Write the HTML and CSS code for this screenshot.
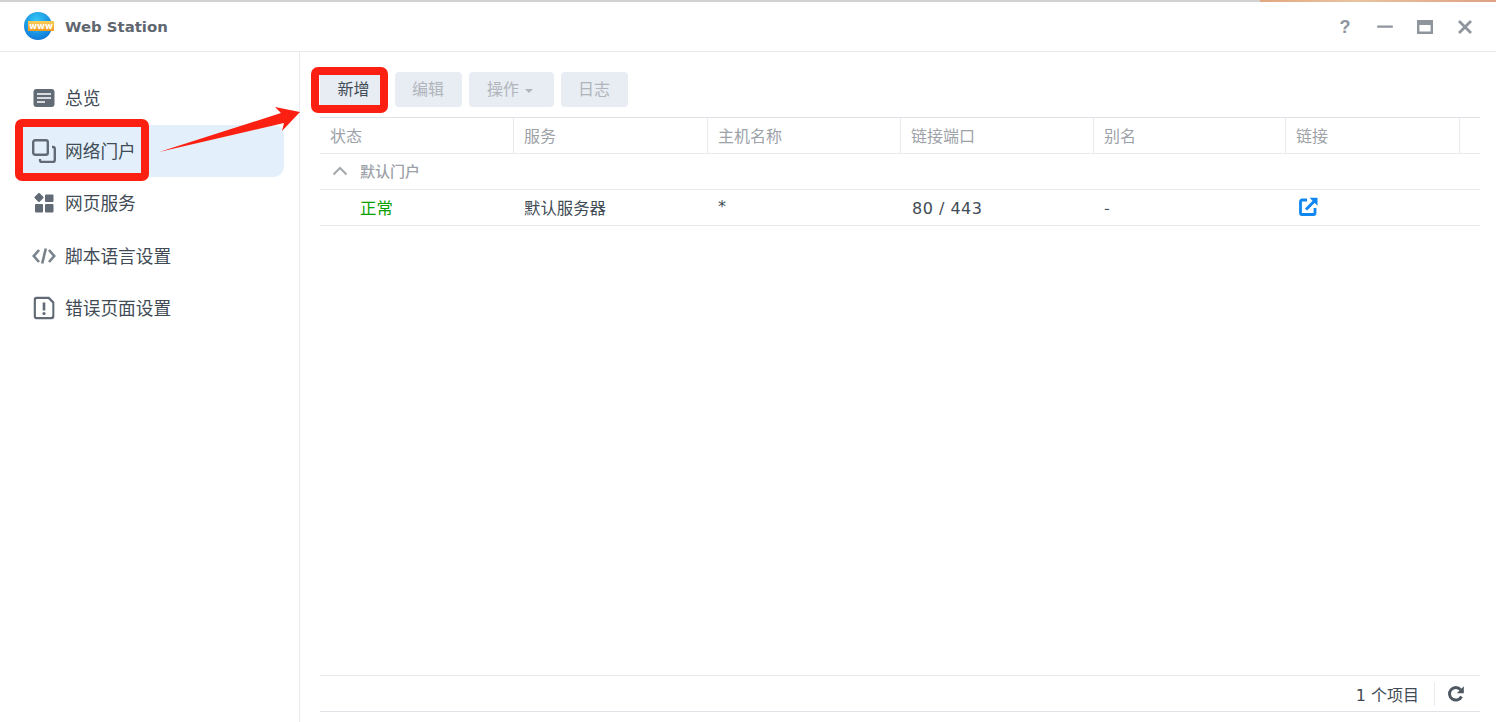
FILE: index.html
```html
<!DOCTYPE html>
<html lang="zh-CN">
<head>
<meta charset="utf-8">
<title>Web Station</title>
<link rel="stylesheet" href="styles.css">
</head>
<body>
<div class="strip"><div class="strip-photo"></div></div>
<header class="titlebar">
  <div class="app">
    <svg class="logo" width="32" height="30" viewBox="0 0 32 30">
      <defs>
        <radialGradient id="g" cx="45%" cy="30%" r="75%"><stop offset="0" stop-color="#35c8f5"/><stop offset="1" stop-color="#0a74d8"/></radialGradient>
        <linearGradient id="o" x1="0" y1="0" x2="0" y2="1"><stop offset="0" stop-color="#f9cf5e"/><stop offset="1" stop-color="#ee9b1e"/></linearGradient>
      </defs>
      <circle cx="15" cy="15" r="14" fill="url(#g)"/>
      <rect x="5" y="10" width="26" height="10" fill="url(#o)"/>
      <text x="18" y="18.200" class="www">www</text>
    </svg>
    <span class="app-name">Web Station</span>
  </div>
  <div class="win-btns">
    <span class="q">?</span>
    <svg width="16" height="16" viewBox="0 0 16 16"><rect x="0" y="6.500" width="16" height="2.200" rx="1" fill="#8e959d"/></svg>
    <svg width="16" height="16" viewBox="0 0 16 16"><path d="M1.200 2.200h13.600v11.600H1.200z" fill="none" stroke="#8e959d" stroke-width="2.400"/><rect x="1" y="1" width="14" height="5" fill="#8e959d"/></svg>
    <svg width="16" height="16" viewBox="0 0 16 16"><path d="M2 2l12 12M14 2L2 14" stroke="#8e959d" stroke-width="2.800" fill="none"/></svg>
  </div>
</header>
<div class="body">
  <nav class="sidebar">
    <a class="nav-item">
      <svg class="nav-icon" width="22" height="18" viewBox="0 0 22 18"><rect x="0.500" y="0" width="21" height="18" rx="3" fill="#616a75"/><path d="M4 5h14M4 9h14M4 13h8" stroke="#fff" stroke-width="1.600"/></svg>
      <span>总览</span>
    </a>
    <a class="nav-item active">
      <svg class="nav-icon" width="24" height="24" viewBox="0 0 24 24" fill="none" stroke="#616a75" stroke-width="2.400"><rect x="1.200" y="1.200" width="14.600" height="14.600" rx="2"/><path d="M20 8h1.200a1.800 1.800 0 0 1 1.600 1.800V21a2 2 0 0 1-2 2H9.800a1.800 1.800 0 0 1-1.800-1.800V20"/></svg>
      <span>网络门户</span>
    </a>
    <a class="nav-item">
      <svg class="nav-icon" width="20" height="20" viewBox="0 0 20 20" fill="#616a75"><rect x="1.500" y="1" width="7" height="7" rx="1" transform="rotate(45 5 4.500)"/><rect x="11" y="1.500" width="8.500" height="7.500" rx="1"/><rect x="1" y="11" width="8" height="8.500" rx="1"/><rect x="11" y="11" width="8.500" height="8.500" rx="1"/></svg>
      <span>网页服务</span>
    </a>
    <a class="nav-item">
      <svg class="nav-icon" width="24" height="18" viewBox="0 0 24 18" fill="none" stroke="#7a828b" stroke-width="2.600"><path d="M7 3L1.800 9 7 15M17 3l5.200 6L17 15M13.800 1.500L10.200 16.500"/></svg>
      <span>脚本语言设置</span>
    </a>
    <a class="nav-item">
      <svg class="nav-icon" width="21" height="23" viewBox="0 0 21 23" fill="none"><path d="M3.500 1.200H15l5 5V19a2.800 2.800 0 0 1-2.800 2.800H3.500A2.500 2.500 0 0 1 1.200 19V3.500a2.400 2.400 0 0 1 2.300-2.300z" stroke="#616a75" stroke-width="2.400"/><path d="M10.500 6v8" stroke="#616a75" stroke-width="2.600"/><circle cx="10.500" cy="17" r="1.600" fill="#616a75"/></svg>
      <span>错误页面设置</span>
    </a>
  </nav>
  <main class="main">
    <div class="toolbar">
      <button class="btn primary">新增</button>
      <button class="btn">编辑</button>
      <button class="btn wide">操作<i class="caret"></i></button>
      <button class="btn">日志</button>
    </div>
    <div class="grid-wrap">
      <div class="row head">
        <div class="cell">状态</div><div class="cell">服务</div><div class="cell">主机名称</div><div class="cell">链接端口</div><div class="cell">别名</div><div class="cell">链接</div><div class="cell"></div>
      </div>
      <div class="group">
        <svg width="16" height="10" viewBox="0 0 16 10" fill="none"><path d="M1.500 8.500L8 2l6.500 6.500" stroke="#a3a8ae" stroke-width="2"/></svg>
        <span>默认门户</span>
      </div>
      <div class="row data">
        <div class="cell status">正常</div><div class="cell">默认服务器</div><div class="cell latin">*</div><div class="cell latin ports">80 / 443</div><div class="cell">-</div>
        <div class="cell link">
          <svg width="19" height="19" viewBox="0 0 19 19" fill="none"><path d="M8 3H3a1.500 1.500 0 0 0-1.500 1.500V16A1.500 1.500 0 0 0 3 17.500h11.500A1.500 1.500 0 0 0 16 16v-5" stroke="#0f86f0" stroke-width="2.800"/><path d="M7 12.500L15.500 4" stroke="#0f86f0" stroke-width="3"/><path d="M10.500 0.800h8v8z" fill="#0f86f0"/></svg>
        </div>
        <div class="cell"></div>
      </div>
    </div>
    <footer class="foot">
      <span class="count">1 个项目</span>
      <span class="sep"></span>
      <svg width="18" height="18" viewBox="0 0 18 18" fill="none"><path d="M14.500 11.500A6.300 6.300 0 1 1 13.600 4.700" stroke="#4f5861" stroke-width="3"/><path d="M16.800 1.200v7h-7z" fill="#4f5861"/></svg>
    </footer>
  </main>
</div>
<div class="mark mark-nav"></div>
<div class="mark mark-btn"></div>
<svg class="arrow" width="150" height="60" viewBox="0 0 150 60"><path d="M0 50L122 11 116 5 141 10 123 29 125 21z" fill="#fc2012"/></svg>
</body>
</html>
```
FILE: styles.css
```css
* { box-sizing: border-box; }
html, body { margin: 0; height: 100%; }
body {
  position: relative;
  width: 1496px;
  height: 722px;
  overflow: hidden;
  background: #fff;
  font-family: "Noto Sans CJK SC", "Liberation Sans", sans-serif;
  color: #414b55;
  display: flex;
  flex-direction: column;
}
.strip { height: 2px; background: #d2d2d2; flex: none; display: flex; justify-content: flex-end; }
.strip-photo { width: 236px; background: linear-gradient(90deg, #e2a77f, #e8c4a0 40%, #dfa184); }
.titlebar {
  height: 50px;
  flex: none;
  border-bottom: 1px solid #e8eaed;
  display: flex;
  align-items: center;
  justify-content: space-between;
  padding: 0 23px 0 23px;
}
.app { display: flex; align-items: center; gap: 10px; }
.logo { display: block; margin-top: -1px; }
.www { font: bold 8.500px "DejaVu Sans", sans-serif; fill: #fff; text-anchor: middle; }
.app-name { font: bold 14.900px "DejaVu Sans", sans-serif; color: #5f6770; }
.win-btns { display: flex; align-items: center; gap: 24px; }
.win-btns svg { display: block; }
.q { width: 16px; text-align: center; font: bold 18px/20px "Liberation Sans", sans-serif; color: #8e959d; }
.body { flex: 1; display: flex; min-height: 0; }
.sidebar {
  width: 300px;
  flex: none;
  border-right: 1px solid #e8eaed;
  padding: 20px 15px 0 20px;
}
.nav-item {
  height: 52.500px;
  display: flex;
  align-items: center;
  position: relative;
  padding: 0 0 2px 45px;
  font-size: 17.700px;
  color: #414b55;
  border-radius: 0 10px 10px 0;
}
.nav-item.active { background: #e3f0fb; }
.nav-icon { position: absolute; left: 24px; top: 50%; transform: translate(-50%, -50%); }
.main {
  flex: 1;
  min-width: 0;
  padding: 20px 16px 10px 20px;
  display: flex;
  flex-direction: column;
}
.toolbar { display: flex; gap: 7px; height: 35px; margin-bottom: 10px; flex: none; }
.btn {
  width: 67px;
  height: 35px;
  border: 0;
  padding: 0 1px 3px 0;
  border-radius: 4px;
  background: #e8ecf3;
  color: #b0b5bb;
  font: 16px "Noto Sans CJK SC", sans-serif;
}
.btn.primary { color: #414b55; width: 68px; }
.btn.wide { width: 85px; padding-right: 3px; }
.caret {
  display: inline-block;
  margin-left: 6px;
  vertical-align: 2px;
  border: 4px solid transparent;
  border-top-color: #b0b5bb;
  border-bottom: 0;
}
.grid-wrap { flex: 1; min-height: 0; }
.row { display: grid; grid-template-columns: 194px 194px 193px 193px 192px 174px 20px; }
.head { height: 37px; border-top: 1px solid #dfe3e8; border-bottom: 1px solid #e8eaed; color: #9da2a8; font-size: 16px; }
.head .cell { padding: 0 0 2px 10px; border-right: 1px solid #e8eaed; display: flex; align-items: center; }
.head .cell:last-child { border-right: 0; }
.group {
  height: 36px;
  border-bottom: 1px solid #e8eaed;
  display: flex;
  align-items: center;
  gap: 12px;
  padding: 0 0 2px 12px;
  color: #9da2a8;
  font-size: 15px;
  font-weight: 500;
}
.data { height: 36px; border-bottom: 1px solid #e8eaed; font-size: 16.400px; color: #414b55; }
.data .cell { padding: 0 0 2px 10px; display: flex; align-items: center; }
.data .status { padding-left: 40px; color: #0aa000; }
.data .latin { font-family: "DejaVu Sans", sans-serif; font-size: 16px; }
.data .ports { letter-spacing: 0.500px; padding: 2px 0 0 11px; }
.data .link { padding-left: 13px; }
.foot {
  flex: none;
  height: 37px;
  border-top: 1px solid #e8eaed;
  border-bottom: 1px solid #dfe3e8;
  display: flex;
  align-items: center;
  justify-content: flex-end;
  padding-right: 15px;
  font: 16px "DejaVu Sans", "Noto Sans CJK SC", sans-serif;
}
.sep { width: 1px; height: 24px; background: #e8eaed; margin: 0 12px 0 15px; }
.foot svg { display: block; }
.mark { position: absolute; border: 8px solid #fc2012; border-radius: 7px; }
.mark-nav { left: 15px; top: 119px; width: 134px; height: 62px; }
.mark-btn { left: 311px; top: 67px; width: 77px; height: 46px; }
.arrow { position: absolute; left: 159px; top: 102px; }
```
